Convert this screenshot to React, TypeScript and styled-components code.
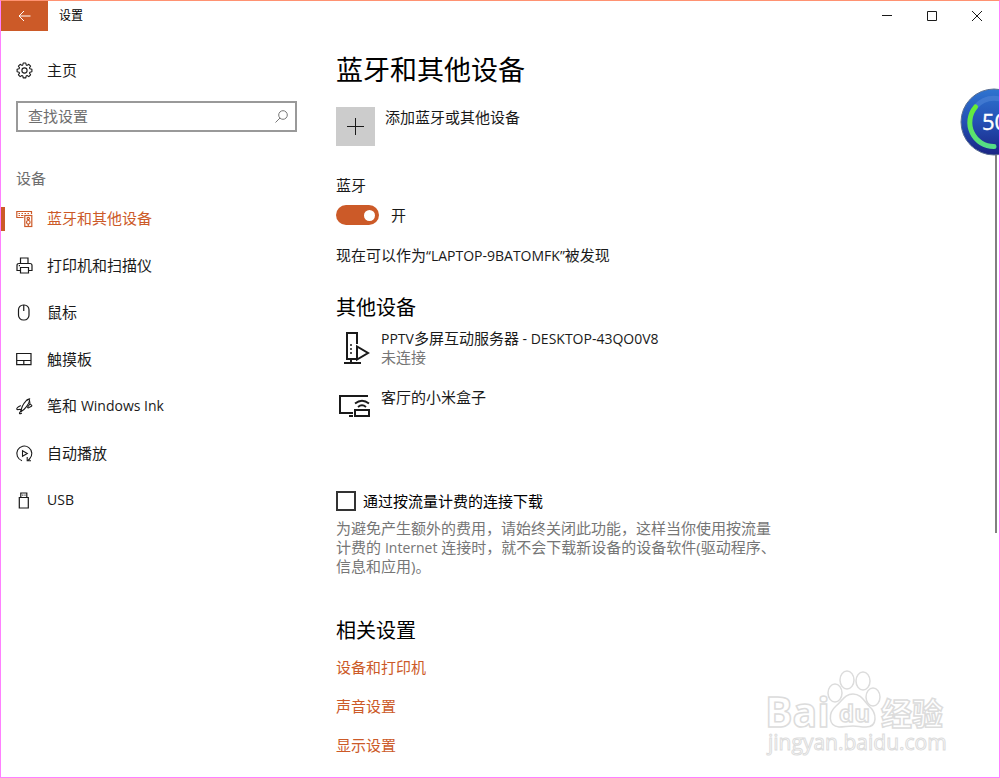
import React from "react";
import styled, { createGlobalStyle } from "styled-components";

const accent = "#cc5a28";
const edge = "#ff80ff";
const latin = '"Open Sans", "Noto Sans CJK SC", sans-serif';

const Global = createGlobalStyle`
  * { box-sizing: border-box; }
  html, body { margin: 0; background: #fff; }
  body, button, input { font-family: ${latin}; font-size: 15px; line-height: 20px; color: #1a1a1a; }
  h1, h2, p, ul { margin: 0; padding: 0; font-weight: 400; }
  ul { list-style: none; }
  button { border: 0; padding: 0; background: none; }
`;

const Window = styled.div`
  position: relative;
  display: flex;
  flex-direction: column;
  height: 100vh;
  overflow: hidden;
  border: 1px solid ${edge};
  border-top-color: #ff9272;
`;

const TitleBar = styled.header`
  display: flex;
  flex: none;
  align-items: center;
  height: 30px;
  font-size: 12px;
`;

const BackButton = styled.button`
  display: flex;
  align-items: center;
  justify-content: center;
  width: 47px;
  height: 30px;
  margin-right: 11px;
  color: #fff;
  background: ${accent};
`;

const WindowTitle = styled.span`
  flex: 1;
  color: #000;
`;

const CaptionButton = styled.button`
  display: flex;
  align-items: center;
  justify-content: center;
  width: 45px;
  height: 30px;
`;

const Body = styled.div`
  display: flex;
  flex: 1;
  min-height: 0;
`;

const Sidebar = styled.nav`
  flex: none;
  width: 296px;
  padding-top: 16px;
`;

const NavLink = styled.a<{ $active?: boolean }>`
  display: flex;
  align-items: center;
  gap: 14px;
  height: 47px;
  padding-left: 11px;
  border-left: 4px solid transparent;
  color: ${(p) => (p.$active ? accent : "#1a1a1a")};
  text-decoration: none;
  background: ${(p) => (p.$active ? `linear-gradient(${accent}, ${accent}) no-repeat left center / 4px 24px` : "none")};
  background-origin: border-box;
`;

const NavText = styled.span`
  padding-bottom: 2px;
`;

const Latin = styled.span`
  font-size: 14px;
`;

const Icon = styled.svg`
  flex: none;
  display: block;
  fill: none;
  stroke: currentColor;
  overflow: visible;
`;

const SearchBox = styled.label`
  display: flex;
  align-items: center;
  height: 31px;
  margin: 7px 0 0 15px;
  padding: 0 7px 0 10px;
  border: 2px solid #999;
  color: #777;
`;

const SearchInput = styled.input`
  flex: 1;
  min-width: 0;
  border: 0;
  outline: 0;
  padding: 0 0 2px;
  background: none;
  &::placeholder { color: #6e6e6e; opacity: 1; }
`;

const GroupName = styled.h2`
  margin: 36px 0 7px 15px;
  font-size: 15px;
  line-height: 20px;
  color: #6e6e6e;
`;

const Main = styled.main`
  flex: 1;
  min-width: 0;
  overflow: hidden;
  padding: 19px 16px 0 39px;
`;

const PageTitle = styled.h1`
  font-size: 27px;
  line-height: 40px;
  color: #000;
`;

const AddButton = styled.button`
  display: flex;
  gap: 10px;
  margin-top: 17px;
  text-align: left;
`;

const PlusTile = styled.span`
  display: flex;
  align-items: center;
  justify-content: center;
  width: 39px;
  height: 39px;
  background: #ccc;
`;

const Label = styled.p`
  margin-top: 29px;
`;

const ToggleRow = styled.label`
  display: flex;
  align-items: center;
  gap: 12px;
  margin-top: 10px;
`;

const Toggle = styled.input`
  appearance: none;
  display: flex;
  align-items: center;
  justify-content: flex-end;
  width: 43px;
  height: 20px;
  margin: 0;
  padding-right: 4px;
  border-radius: 10px;
  background: ${accent};
  &::after {
    content: "";
    width: 11px;
    height: 11px;
    border-radius: 50%;
    background: #fff;
  }
  &:not(:checked) { justify-content: flex-start; padding-left: 4px; background: #999; }
`;

const Note = styled.p`
  margin-top: 20px;
`;

const SectionTitle = styled.h2<{ $space: number }>`
  margin-top: ${(p) => p.$space}px;
  font-size: 20px;
  line-height: 28px;
  color: #000;
`;

const Devices = styled.ul`
  display: flex;
  flex-direction: column;
  gap: 20px;
  margin-top: 7px;
`;

const Device = styled.li`
  display: flex;
  gap: 8px;
  min-height: 39px;
  padding-left: 3px;
  line-height: 19px;
  & > svg { margin-top: 2px; }
`;

const Status = styled.div`
  color: #767676;
`;

const CheckRow = styled.label`
  display: flex;
  align-items: center;
  gap: 7px;
  margin-top: 64px;
  color: #000;
`;

const CheckBox = styled.input`
  appearance: none;
  width: 20px;
  height: 20px;
  margin: 0;
  border: 2px solid #333;
  background: #fff;
`;

const Hint = styled.p`
  max-width: 448px;
  margin-top: 8px;
  line-height: 19px;
  color: #767676;
`;

const Links = styled.ul`
  display: flex;
  flex-direction: column;
  gap: 19px;
  margin-top: 12px;
`;

const SettingLink = styled.a`
  color: ${accent};
  text-decoration: none;
`;

const ScrollTrack = styled.div`
  flex: none;
  width: 4px;
  padding-top: 69px;
`;

const ScrollThumb = styled.div`
  width: 2px;
  height: 64%;
  background: #808080;
`;

const Gauge = styled.svg`
  position: absolute;
  top: 85px;
  right: -31px;
`;

const Watermark = styled.svg`
  position: absolute;
  right: 50px;
  bottom: 16px;
  fill: #fff;
  stroke: #dcdcdc;
  pointer-events: none;
  overflow: visible;
`;

const GearIcon = () => (
  <Icon width="17" height="17" viewBox="0 0 17 17" strokeWidth="1.1">
    <circle cx="8.5" cy="8.5" r="2.6" />
    <path d="M7.2 1h2.6l.4 2 .9.4 1.7-1.1 1.8 1.8-1.1 1.7.4.9 2 .5v2.6l-2 .4-.4.9 1.1 1.7-1.8 1.8-1.7-1.1-.9.4-.4 2H7.2l-.4-2-.9-.4-1.7 1.1-1.8-1.8 1.1-1.7-.4-.9-2-.4V7.2l2-.5.4-.9-1.1-1.7 1.8-1.8 1.7 1.1.9-.4z" strokeLinejoin="round" />
  </Icon>
);

const DevicesIcon = () => (
  <Icon width="17" height="17" viewBox="0 0 17 17" strokeWidth="1.2">
    <path d="M7.5 7.500H.8v-6h14.700v2.500" />
    <path d="M2.500 3.500h1.500M5.500 3.500h1.500M8.500 3.500h1.500M11.500 3.500h1.500M2.500 5.500h1.500M5 5.500h2.500" />
    <rect x="8.800" y="5.500" width="7" height="11" />
    <circle cx="12.300" cy="8.500" r="1.200" />
    <circle cx="12.300" cy="12.300" r="1.800" />
    <path d="M12.300 14v2" />
  </Icon>
);

const PrinterIcon = () => (
  <Icon width="17" height="17" viewBox="0 0 17 17" strokeWidth="1.2">
    <path d="M4.500 6.500V1h7.500v5.500M4.500 13.500H1v-5q0-2 2-2h11q2 0 2 2v5h-3.500" />
    <path d="M4.500 10.500h8v5.500h-8z" />
    <path d="M2.800 8.700h1.200" />
  </Icon>
);

const MouseIcon = () => (
  <Icon width="17" height="17" viewBox="0 0 17 17" strokeWidth="1.2">
    <rect x="2.500" y="1" width="10.500" height="15" rx="4.800" />
    <path d="M7.750 1v6" />
  </Icon>
);

const TouchpadIcon = () => (
  <Icon width="17" height="17" viewBox="0 0 17 17" strokeWidth="1.200">
    <path d="M.7 2.500h14.300v11.200H.7zM.7 9.500h14.300M7.800 9.500v4.200" />
  </Icon>
);

const PenIcon = () => (
  <Icon width="17" height="17" viewBox="0 0 17 17" strokeWidth="1.100" strokeLinecap="round" strokeLinejoin="round">
    <path d="M5.200 13.500C5 10.500 7.500 5.500 10.500 2.300 12 .8 13.500 1 13.500 2.500 13.300 5.500 9 11.500 5.200 13.500z" />
    <path d="M11 2.200l2.700-1.400M13.500 2.500l.5 3.300-2.500 3.500" />
    <path d="M4.500 7.800C2.500 8.500.3 10 .8 11.200c.6 1.300 3.300-.6 4.200.5.600 1-1 2.200-1.500 3.300-.3 1 1 .8 2 .2M14.300 6.500c1.700.2 2 1.300.8 2-1 .6-2.500 1-3.100 1.500" />
  </Icon>
);

const AutoplayIcon = () => (
  <Icon width="17" height="17" viewBox="0 0 17 17" strokeWidth="1.100">
    <path d="M6 15.700A7.500 7.500 0 1 1 13.500 14l-1.500 1.500" />
    <path d="M11.200 12v3.700h3.800" />
    <path d="M6.500 5.800l4.800 2.700-4.800 2.700z" />
  </Icon>
);

const UsbIcon = () => (
  <Icon width="17" height="17" viewBox="0 0 17 17" strokeWidth="1.200">
    <path d="M3.300 5.500h9V16h-9zM4.800 5.500v-4.500h6v4.500M6.300 3.200h1M8.500 3.200h1" />
  </Icon>
);

const ServerIcon = () => (
  <Icon width="34" height="34" viewBox="0 0 34 34" strokeWidth="2">
    <path d="M8 28V2h10v11M12 28v4M5 32h17M7 28h10" />
    <path d="M18 15.500v13l11-6.500z" />
    <path d="M12 13v2M12 17v2M12 21v2" strokeWidth="1.500" />
  </Icon>
);

const CastIcon = () => (
  <Icon width="34" height="34" viewBox="0 0 34 34" strokeWidth="2">
    <path d="M29 6H1v17h13M10 26h4" />
    <path d="M16 20h14v6H16z" />
    <path d="M16 13.500q7-5.500 14 0M19 17q4-3.500 8 0" strokeWidth="1.800" />
  </Icon>
);

const nav = [
  { text: "蓝牙和其他设备", icon: <DevicesIcon />, active: true },
  { text: "打印机和扫描仪", icon: <PrinterIcon /> },
  { text: "鼠标", icon: <MouseIcon /> },
  { text: "触摸板", icon: <TouchpadIcon /> },
  { text: "笔和 ", latin: "Windows Ink", icon: <PenIcon /> },
  { text: "自动播放", icon: <AutoplayIcon /> },
  { text: "", latin: "USB", icon: <UsbIcon /> },
];

const related = ["设备和打印机", "声音设置", "显示设置", "更多蓝牙选项"];

export default function App() {
  return (
    <>
      <Global />
      <Window>
        <TitleBar>
          <BackButton aria-label="返回">
            <Icon width="13" height="12" viewBox="0 0 13 12">
              <path d="M12.500 6H1M6 1L1 6l5 5" />
            </Icon>
          </BackButton>
          <WindowTitle>设置</WindowTitle>
          <CaptionButton aria-label="最小化">
            <Icon width="10" height="10" viewBox="0 0 10 10"><path d="M0 4.500h10" /></Icon>
          </CaptionButton>
          <CaptionButton aria-label="最大化">
            <Icon width="10" height="10" viewBox="0 0 10 10"><path d="M.5.5h9v9h-9z" /></Icon>
          </CaptionButton>
          <CaptionButton aria-label="关闭">
            <Icon width="10" height="10" viewBox="0 0 10 10"><path d="M0 0l10 10M10 0L0 10" /></Icon>
          </CaptionButton>
        </TitleBar>
        <Body>
          <Sidebar>
            <NavLink href="#home"><GearIcon /><NavText>主页</NavText></NavLink>
            <SearchBox>
              <SearchInput type="text" placeholder="查找设置" aria-label="查找设置" />
              <Icon width="13" height="13" viewBox="0 0 13 13">
                <circle cx="8" cy="5" r="4.300" />
                <path d="M5 8L.5 12.500" />
              </Icon>
            </SearchBox>
            <GroupName>设备</GroupName>
            <ul>
              {nav.map((n, i) => (
                <li key={i}>
                  <NavLink href="#device" $active={n.active}>
                    {n.icon}
                    <NavText>{n.text}{n.latin && <Latin>{n.latin}</Latin>}</NavText>
                  </NavLink>
                </li>
              ))}
            </ul>
          </Sidebar>
          <Main>
            <PageTitle>蓝牙和其他设备</PageTitle>
            <AddButton>
              <PlusTile>
                <Icon width="17" height="17" viewBox="0 0 17 17"><path d="M8.500 0v17M0 8.500h17" /></Icon>
              </PlusTile>
              添加蓝牙或其他设备
            </AddButton>
            <Label>蓝牙</Label>
            <ToggleRow>
              <Toggle type="checkbox" role="switch" defaultChecked />
              开
            </ToggleRow>
            <Note>现在可以作为<Latin>“LAPTOP-9BATOMFK”</Latin>被发现</Note>
            <SectionTitle $space={28}>其他设备</SectionTitle>
            <Devices>
              <Device>
                <ServerIcon />
                <div>
                  <Latin>PPTV</Latin>多屏互动服务器<Latin> - DESKTOP-43QO0V8</Latin>
                  <Status>未连接</Status>
                </div>
              </Device>
              <Device><CastIcon />客厅的小米盒子</Device>
            </Devices>
            <CheckRow>
              <CheckBox type="checkbox" />
              通过按流量计费的连接下载
            </CheckRow>
            <Hint>
              为避免产生额外的费用，请始终关闭此功能，这样当你使用按流量计费的 <Latin>Internet</Latin> 连接时，就不会下载新设备的设备软件(驱动程序、信息和应用)。
            </Hint>
            <SectionTitle $space={41}>相关设置</SectionTitle>
            <Links>
              {related.map((r) => (
                <li key={r}><SettingLink href="#related">{r}</SettingLink></li>
              ))}
            </Links>
          </Main>
          <ScrollTrack><ScrollThumb /></ScrollTrack>
        </Body>
        <Gauge width="72" height="72" viewBox="0 0 72 72">
          <defs>
            <linearGradient id="ball" x1="0" y1="0" x2="0" y2="1">
              <stop offset="0" stopColor="#2f74d0" />
              <stop offset=".5" stopColor="#2450b4" />
              <stop offset="1" stopColor="#1a2484" />
            </linearGradient>
            <linearGradient id="arc" x1="0" y1="0" x2="0" y2="1">
              <stop offset="0" stopColor="#66ee33" />
              <stop offset="1" stopColor="#55dd88" />
            </linearGradient>
          </defs>
          <circle cx="36" cy="36" r="33" fill="url(#ball)" stroke="#5b6f92" strokeWidth="1" />
          <path d="M17.500 21A24 24 0 0 1 54.500 21" fill="none" stroke="#4a80d4" strokeOpacity=".7" strokeWidth="5" />
          <path d="M17.500 21A24 24 0 0 0 36 60.500" fill="none" stroke="url(#arc)" strokeWidth="5" strokeLinecap="round" />
          <text x="24" y="44" fontSize="22" fill="#fff" stroke="#fff" strokeWidth=".4">50</text>
        </Gauge>
        <Watermark width="182" height="92" viewBox="0 0 182 92" strokeWidth="1.500">
          <text x="-2" y="58" fontSize="41" fontWeight="700">Bai</text>
          <ellipse cx="68" cy="24" rx="7" ry="9" />
          <ellipse cx="80" cy="11" rx="7" ry="9" />
          <ellipse cx="96" cy="12" rx="7" ry="9" />
          <ellipse cx="106" cy="28" rx="7" ry="9" />
          <path d="M86 25c8 0 11 7 16 12 8 7 9 21-3 21-6 0-8-1-13-1s-9 1-14 1c-11-1-11-14-3-21 6-5 9-12 17-12z" />
          <text x="72" y="53" fontSize="24" fontWeight="700">du</text>
          <text x="114" y="56" fontSize="31" fontWeight="700">经验</text>
          <text x="1" y="81" fontSize="21" strokeWidth="1">jingyan.baidu.com</text>
        </Watermark>
      </Window>
    </>
  );
}
